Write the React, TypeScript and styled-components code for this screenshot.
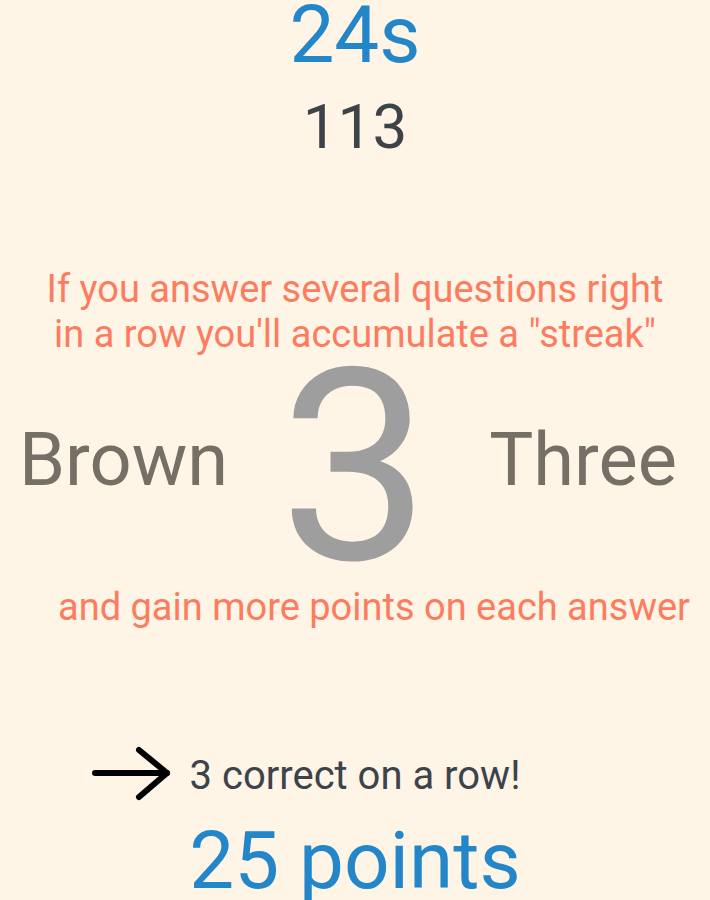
import React from "react";
import styled, { createGlobalStyle } from "styled-components";

const Global = createGlobalStyle`
  html, body { margin: 0; padding: 0; background: #fef5e6; }
  body { font-family: Roboto, "Noto Sans", sans-serif; overflow: hidden; }
`;

const Page = styled.div`
  width: 710px;
  height: 900px;
  overflow: hidden;
  background: #fef5e6;
  display: flex;
  flex-direction: column;
  align-items: center;
`;

const Timer = styled.div`
  margin-top: -5px;
  font-size: 80px;
  line-height: 1;
  color: #2386c8;
`;

const Score = styled.div`
  margin-top: 21px;
  font-size: 62px;
  line-height: 1;
  color: #3e434a;
`;

const Hint = styled.div<{ $mt: number; $shift?: number }>`
  margin-top: ${(p) => p.$mt}px;
  margin-left: ${(p) => (p.$shift ?? 0) * 2}px;
  font-size: 38px;
  line-height: 45px;
  color: #fd7c60;
  text-align: center;
  white-space: nowrap;
`;

const Row = styled.div`
  margin-top: 3px;
  width: 100%;
  box-sizing: border-box;
  padding: 0 33px 0 19px;
  display: flex;
  align-items: center;
  justify-content: space-between;
`;

const Word = styled.div`
  font-size: 74px;
  line-height: 1;
  color: #756f65;
  margin-bottom: 14px;
`;

const BigDigit = styled.div`
  font-size: 268px;
  line-height: 0.8;
  color: #9e9e9e;
  margin-right: 8px;
`;

const StreakRow = styled.div`
  position: relative;
  margin-top: 126px;
`;

const StreakText = styled.div`
  font-size: 40px;
  line-height: 1;
  color: #3d434a;
`;

const Arrow = styled.svg`
  position: absolute;
  left: -99px;
  top: -11px;
`;

const Points = styled.div`
  margin-top: 25px;
  font-size: 80px;
  line-height: 1;
  color: #2386c8;
  white-space: nowrap;
`;

export default function App() {
  return (
    <>
      <Global />
      <Page>
        <Timer>24s</Timer>
        <Score>113</Score>
        <Hint $mt={109}>
          If you answer several questions right
          <br />
          in a row you'll accumulate a "streak"
        </Hint>
        <Row>
          <Word>Brown</Word>
          <BigDigit>3</BigDigit>
          <Word>Three</Word>
        </Row>
        <Hint $mt={11} $shift={19}>
          and gain more points on each answer
        </Hint>
        <StreakRow>
          <Arrow width="80" height="56" viewBox="0 0 80 56">
            <g
              fill="none"
              stroke="#000"
              strokeWidth="6"
              strokeLinecap="round"
              strokeLinejoin="round"
            >
              <path d="M4 28H76" />
              <path d="M48 5L76 28L48 52" />
            </g>
          </Arrow>
          <StreakText>3 correct on a row!</StreakText>
        </StreakRow>
        <Points>25 points</Points>
      </Page>
    </>
  );
}
